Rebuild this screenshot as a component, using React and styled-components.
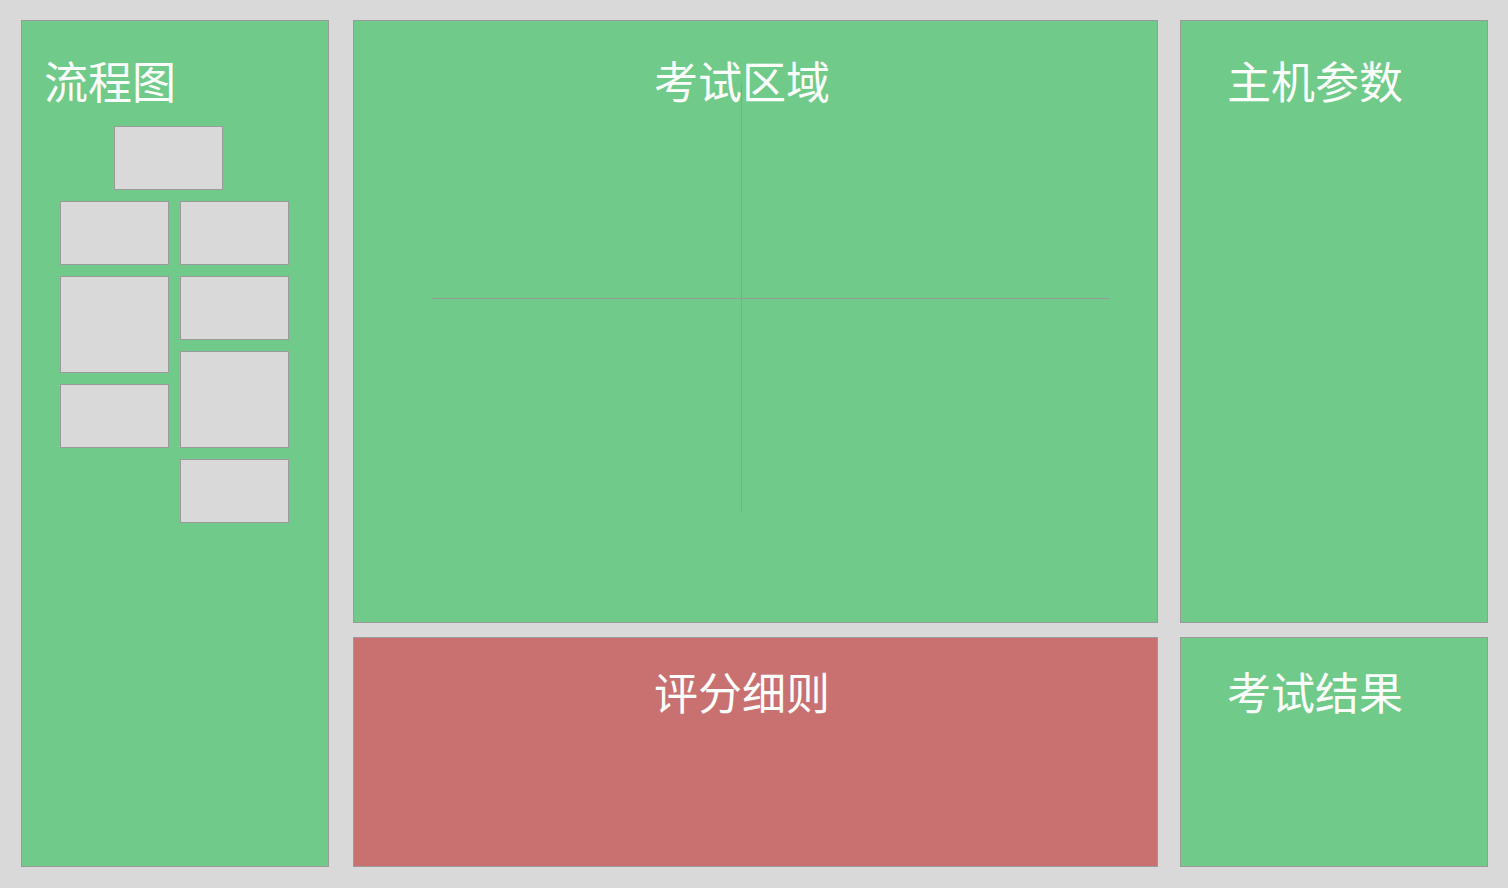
import React from 'react';
import styled, { createGlobalStyle } from 'styled-components';

const GlobalStyle = createGlobalStyle`
    html, body {
        margin: 0;
        padding: 0;
        background: #d9d9d9;
    }
    body {
        font-family: 'Noto Sans CJK SC', 'Noto Sans', sans-serif;
    }
`;

// columns 2 and 4 are the gutters between panels
const Page = styled.div`
    box-sizing: border-box;
    width: 1508px;
    height: 888px;
    padding: 20px 20px 21px 21px;
    display: grid;
    grid-template-columns: 308px 24px 805px 22px 308px;
    grid-template-rows: 603px 230px;
    row-gap: 14px;
`;

const Panel = styled.section`
    position: relative;
    box-sizing: border-box;
    border: 1px solid #9a9a9a;
    background: ${p => (p.$red ? '#c97070' : '#70ca89')};
    grid-row: ${p => p.$rows || 'auto'};
    grid-column: ${p => p.$col || 'auto'};
    overflow: hidden;
`;

const Title = styled.h2`
    margin: 0;
    padding: ${p => p.$top || 36}px ${p => p.$right || 0}px 0 ${p => p.$left || 0}px;
    font-size: 44px;
    font-weight: 400;
    line-height: 44px;
    color: #fbfdfb;
    text-align: ${p => (p.$left ? 'left' : 'center')};
`;

const Flow = styled.div`
    display: flex;
    flex-direction: column;
    gap: 11px;
    padding: 24px 0 0 38px;
`;

const Columns = styled.div`
    display: flex;
    gap: 11px;
    align-items: flex-start;
`;

const Column = styled.div`
    display: flex;
    flex-direction: column;
    gap: 11px;
`;

const Node = styled.div`
    box-sizing: border-box;
    width: 109px;
    height: ${p => (p.$tall ? 97 : 64)}px;
    margin-left: ${p => p.$offset || 0}px;
    background: #d9d9d9;
    border: 1px solid #9a9a9a;
`;

const VLine = styled.div`
    position: absolute;
    left: 387px;
    top: 62px;
    width: 1px;
    height: 429px;
    background: #9a9a9a;
`;

const HLine = styled.div`
    position: absolute;
    left: 78px;
    top: 277px;
    width: 678px;
    height: 1px;
    background: #9a9a9a;
`;

export default function App() {
    return (
        <>
            <GlobalStyle />
            <Page>
                <Panel $rows="1 / 3" $col="1">
                    <Title $left={22} $top={37}>流程图</Title>
                    <Flow>
                        <Node $offset={54} />
                        <Columns>
                            <Column>
                                <Node />
                                <Node $tall />
                                <Node />
                            </Column>
                            <Column>
                                <Node />
                                <Node />
                                <Node $tall />
                                <Node />
                            </Column>
                        </Columns>
                    </Flow>
                </Panel>
                <Panel $col="3">
                    <Title $right={27} $top={37}>考试区域</Title>
                    <VLine />
                    <HLine />
                </Panel>
                <Panel $col="5">
                    <Title $right={38} $top={37}>主机参数</Title>
                </Panel>
                <Panel $red $col="3">
                    <Title $right={27} $top={31}>评分细则</Title>
                </Panel>
                <Panel $col="5">
                    <Title $right={38} $top={31}>考试结果</Title>
                </Panel>
            </Page>
        </>
    );
}
